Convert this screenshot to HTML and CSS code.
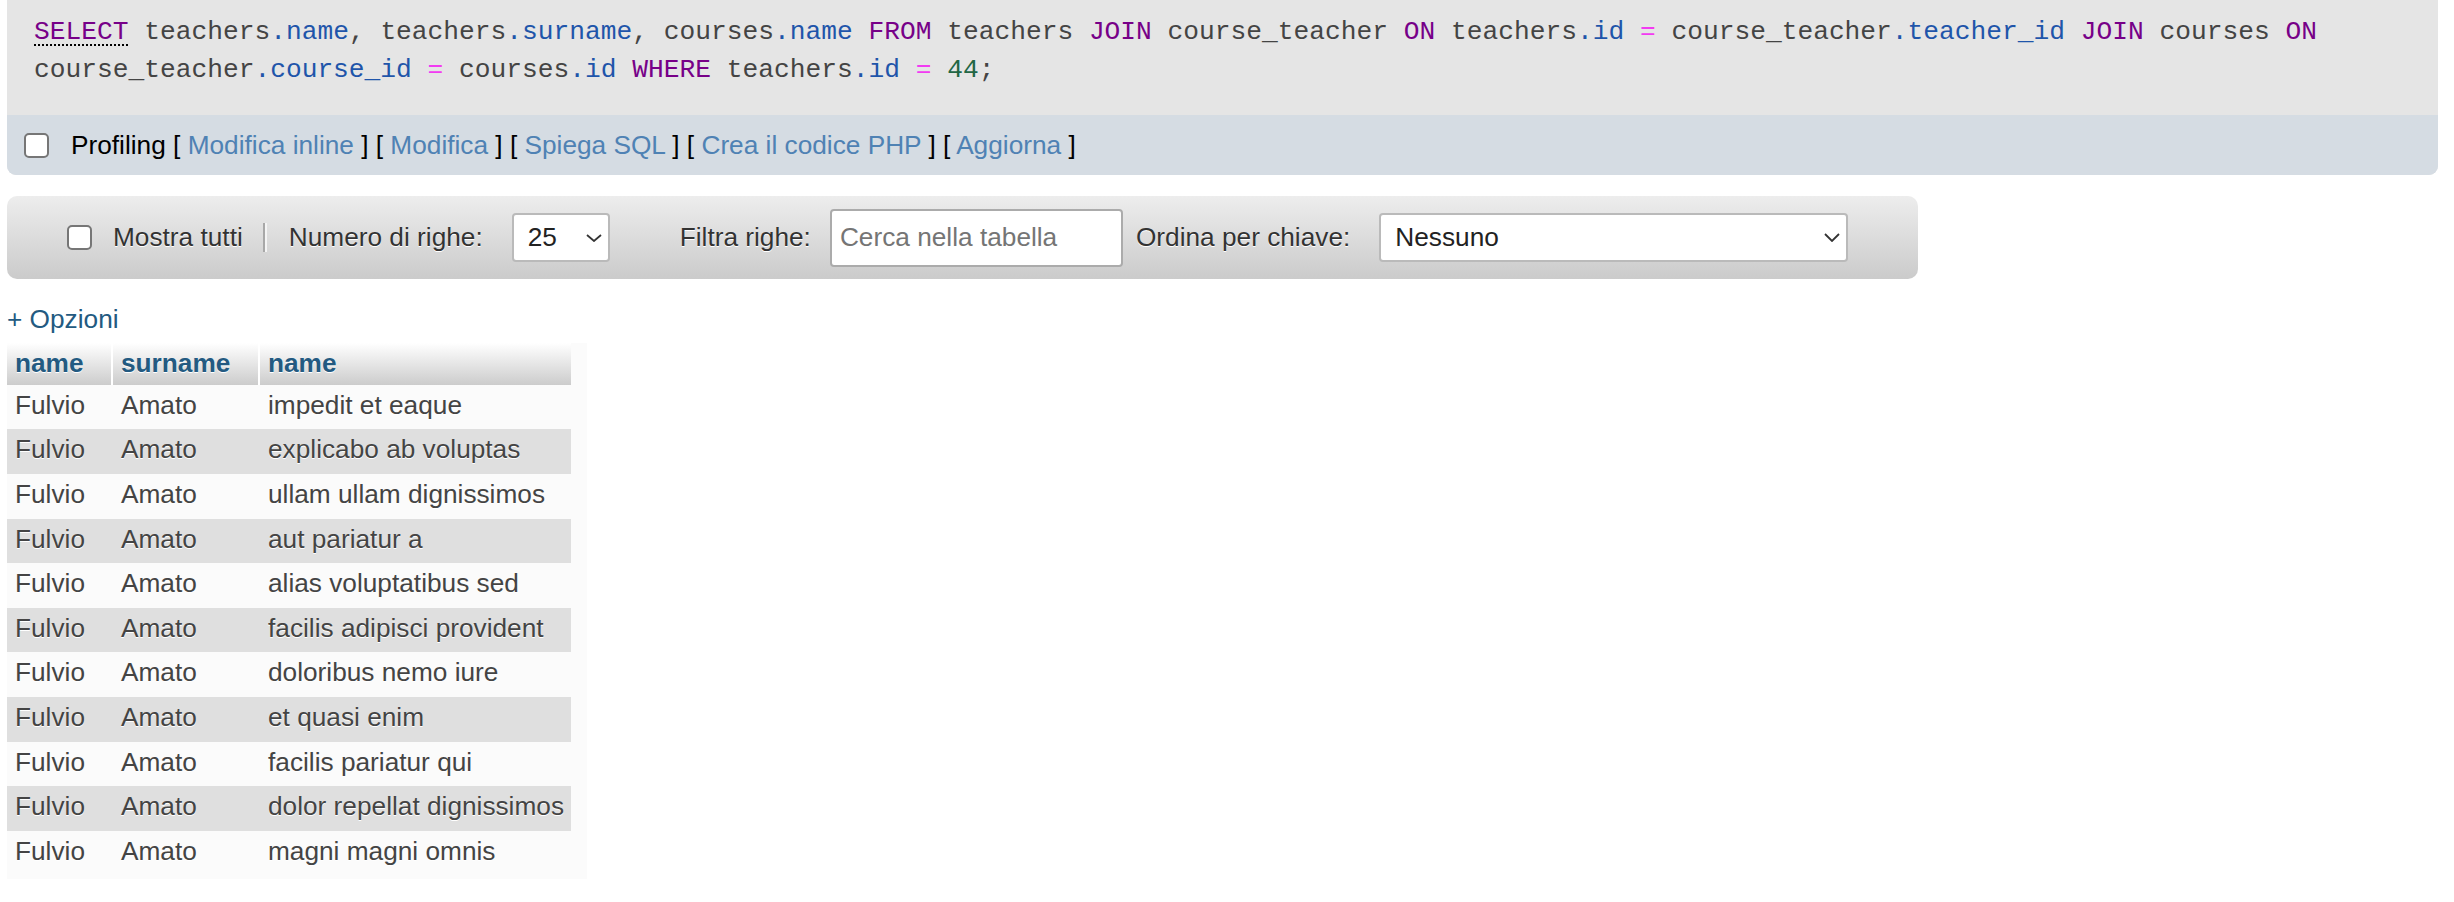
FILE: index.html
```html
<!DOCTYPE html>
<html lang="it">
<head>
<meta charset="utf-8">
<title>phpMyAdmin - risultato query</title>
<link rel="stylesheet" href="styles.css">
</head>
<body>
<div class="query">
<pre class="sql"><span class="kw kw-select">SELECT</span> teachers<span class="id">.name</span>, teachers<span class="id">.surname</span>, courses<span class="id">.name</span> <span class="kw">FROM</span> teachers <span class="kw">JOIN</span> course_teacher <span class="kw">ON</span> teachers<span class="id">.id</span> <span class="op">=</span> course_teacher<span class="id">.teacher_id</span> <span class="kw">JOIN</span> courses <span class="kw">ON</span>
course_teacher<span class="id">.course_id</span> <span class="op">=</span> courses<span class="id">.id</span> <span class="kw">WHERE</span> teachers<span class="id">.id</span> <span class="op">=</span> <span class="num">44</span>;</pre>
  <div class="profiling">
    <input type="checkbox" class="cb profiling-cb">
    <span>Profiling [ <a href="#">Modifica inline</a> ] [ <a href="#">Modifica</a> ] [ <a href="#">Spiega SQL</a> ] [ <a href="#">Crea il codice PHP</a> ] [ <a href="#">Aggiorna</a> ]</span>
  </div>
</div>

<div class="navbar">
  <input type="checkbox" class="cb">
  <span class="lbl lbl-show">Mostra tutti</span>
  <span class="sep"></span>
  <span class="lbl lbl-rows">Numero di righe:</span>
  <div class="dropdown dropdown-rows"><span>25</span><svg class="chev" width="16" height="8" viewBox="0 0 16 8"><polyline points="1,1 8,7 15,1"/></svg></div>
  <span class="lbl lbl-filter">Filtra righe:</span>
  <input type="text" class="search" placeholder="Cerca nella tabella">
  <span class="lbl lbl-sort">Ordina per chiave:</span>
  <div class="dropdown dropdown-key"><span>Nessuno</span><svg class="chev" width="16" height="9" viewBox="0 0 16 9"><polyline points="1,1 8,8 15,1"/></svg></div>
</div>

<div class="options"><a href="#">+ Opzioni</a></div>

<div class="data">
  <table class="results">
    <colgroup><col class="c1"><col class="c2"><col class="c3"></colgroup>
    <thead>
      <tr><th>name</th><th>surname</th><th>name</th></tr>
    </thead>
    <tbody>
      <tr class="odd"><td>Fulvio</td><td>Amato</td><td>impedit et eaque</td></tr>
      <tr class="even"><td>Fulvio</td><td>Amato</td><td>explicabo ab voluptas</td></tr>
      <tr class="odd"><td>Fulvio</td><td>Amato</td><td>ullam ullam dignissimos</td></tr>
      <tr class="even"><td>Fulvio</td><td>Amato</td><td>aut pariatur a</td></tr>
      <tr class="odd"><td>Fulvio</td><td>Amato</td><td>alias voluptatibus sed</td></tr>
      <tr class="even"><td>Fulvio</td><td>Amato</td><td>facilis adipisci provident</td></tr>
      <tr class="odd"><td>Fulvio</td><td>Amato</td><td>doloribus nemo iure</td></tr>
      <tr class="even"><td>Fulvio</td><td>Amato</td><td>et quasi enim</td></tr>
      <tr class="odd"><td>Fulvio</td><td>Amato</td><td>facilis pariatur qui</td></tr>
      <tr class="even"><td>Fulvio</td><td>Amato</td><td>dolor repellat dignissimos</td></tr>
      <tr class="odd"><td>Fulvio</td><td>Amato</td><td>magni magni omnis</td></tr>
    </tbody>
  </table>
</div>
</body>
</html>
```

FILE: styles.css
```css
html, body {
  margin: 0;
  padding: 0;
  background: #fff;
}

body {
  font-family: "Liberation Sans", Arial, sans-serif;
  font-size: 26.24px;
  color: #444;
}

a {
  text-decoration: none;
}

/* ---------- SQL query box ---------- */
.query {
  margin: 0 16px 0 7px;
  background: #e5e5e5;
  border-radius: 0 0 9px 9px;
  overflow: hidden;
}

.sql {
  margin: 0;
  padding: 13px 27px 26px;
  font-family: "Liberation Mono", "DejaVu Sans Mono", monospace;
  font-size: 26.24px;
  line-height: 38px;
  color: #444;
  white-space: pre;
}

.sql .kw { color: #770088; }
.sql .id { color: #1f55aa; }
.sql .op { color: #f23bf2; }
.sql .num { color: #226644; }
.sql .kw-select {
  text-decoration: underline dotted #000;
  text-decoration-thickness: 2px;
  text-underline-offset: 5px;
}

.profiling {
  height: 60px;
  background: #d5dce3;
  display: flex;
  align-items: center;
  padding-left: 17px;
  color: #000;
}

.profiling a {
  color: #4f82b4;
}

.profiling-cb {
  margin-right: 22px !important;
}

/* ---------- checkbox ---------- */
.cb {
  appearance: none;
  -webkit-appearance: none;
  width: 25px;
  height: 25px;
  margin: 0;
  box-sizing: border-box;
  border: 2px solid #767676;
  border-radius: 5px;
  background: #fff;
  flex: none;
}

/* ---------- navigation toolbar ---------- */
.navbar {
  margin: 21px 0 0 7px;
  width: 1911px;
  height: 83px;
  box-sizing: border-box;
  padding-left: 60px;
  border-radius: 10px;
  background: linear-gradient(#ededed, #cbcbcb);
  display: flex;
  align-items: center;
  color: #333;
}

.lbl {
  white-space: nowrap;
  text-shadow: 0 1px 0 #fff;
}

.lbl-show { margin-left: 21px; }
.lbl-rows { margin-left: 22px; }
.lbl-filter { margin-left: 70px; }
.lbl-sort { margin-left: 13px; }

.sep {
  margin-left: 20px;
  width: 2px;
  height: 29px;
  background: #a8a8a8;
  border-right: 2px solid #f4f4f4;
}

.dropdown {
  height: 49px;
  box-sizing: border-box;
  border: 2px solid #bababa;
  border-radius: 4px;
  background: #fff;
  display: flex;
  align-items: center;
  padding-left: 14px;
  color: #222;
  margin-left: 29px;
}

.dropdown-rows { width: 98px; }
.dropdown-key { width: 469px; }

.chev {
  margin-left: auto;
  margin-right: 6px;
  fill: none;
  stroke: #333;
  stroke-width: 1.8;
}

.search {
  margin-left: 19px;
  width: 293px;
  height: 58px;
  box-sizing: border-box;
  border: 2px solid #ababab;
  border-radius: 4px;
  padding: 0 8px;
  font-family: inherit;
  font-size: 26.24px;
  color: #222;
  background: #fff;
  outline: none;
}

.search::placeholder {
  color: #757575;
}

/* ---------- options link ---------- */
.options {
  margin: 25px 0 0 7px;
}

.options a {
  color: #235a81;
}

/* ---------- results table ---------- */
.data {
  display: inline-block;
  margin: 7.5px 0 0 7px;
  padding: 0 16px 4px 0;
  background: #fbfbfb;
}

.results {
  border-collapse: separate;
  border-spacing: 0;
  table-layout: fixed;
  width: 564px;
}

.results .c1 { width: 106px; }
.results .c2 { width: 147px; }
.results .c3 { width: 311px; }

.results th {
  background: linear-gradient(#ffffff, #cccccc);
  color: #235a81;
  font-weight: bold;
  text-align: left;
  padding: 5px 8px 7.3px;
  line-height: 30px;
  border-right: 2px solid #fff;
  text-shadow: 0 1px 0 #fff;
  white-space: nowrap;
}

.results th:last-child {
  border-right: 0;
}

.results td {
  padding: 5px 8px 9.6px;
  line-height: 30px;
  color: #444;
  text-shadow: 0 1px 0 #fff;
  white-space: nowrap;
}

.results tr.even td {
  background: #dfdfdf;
}
```
